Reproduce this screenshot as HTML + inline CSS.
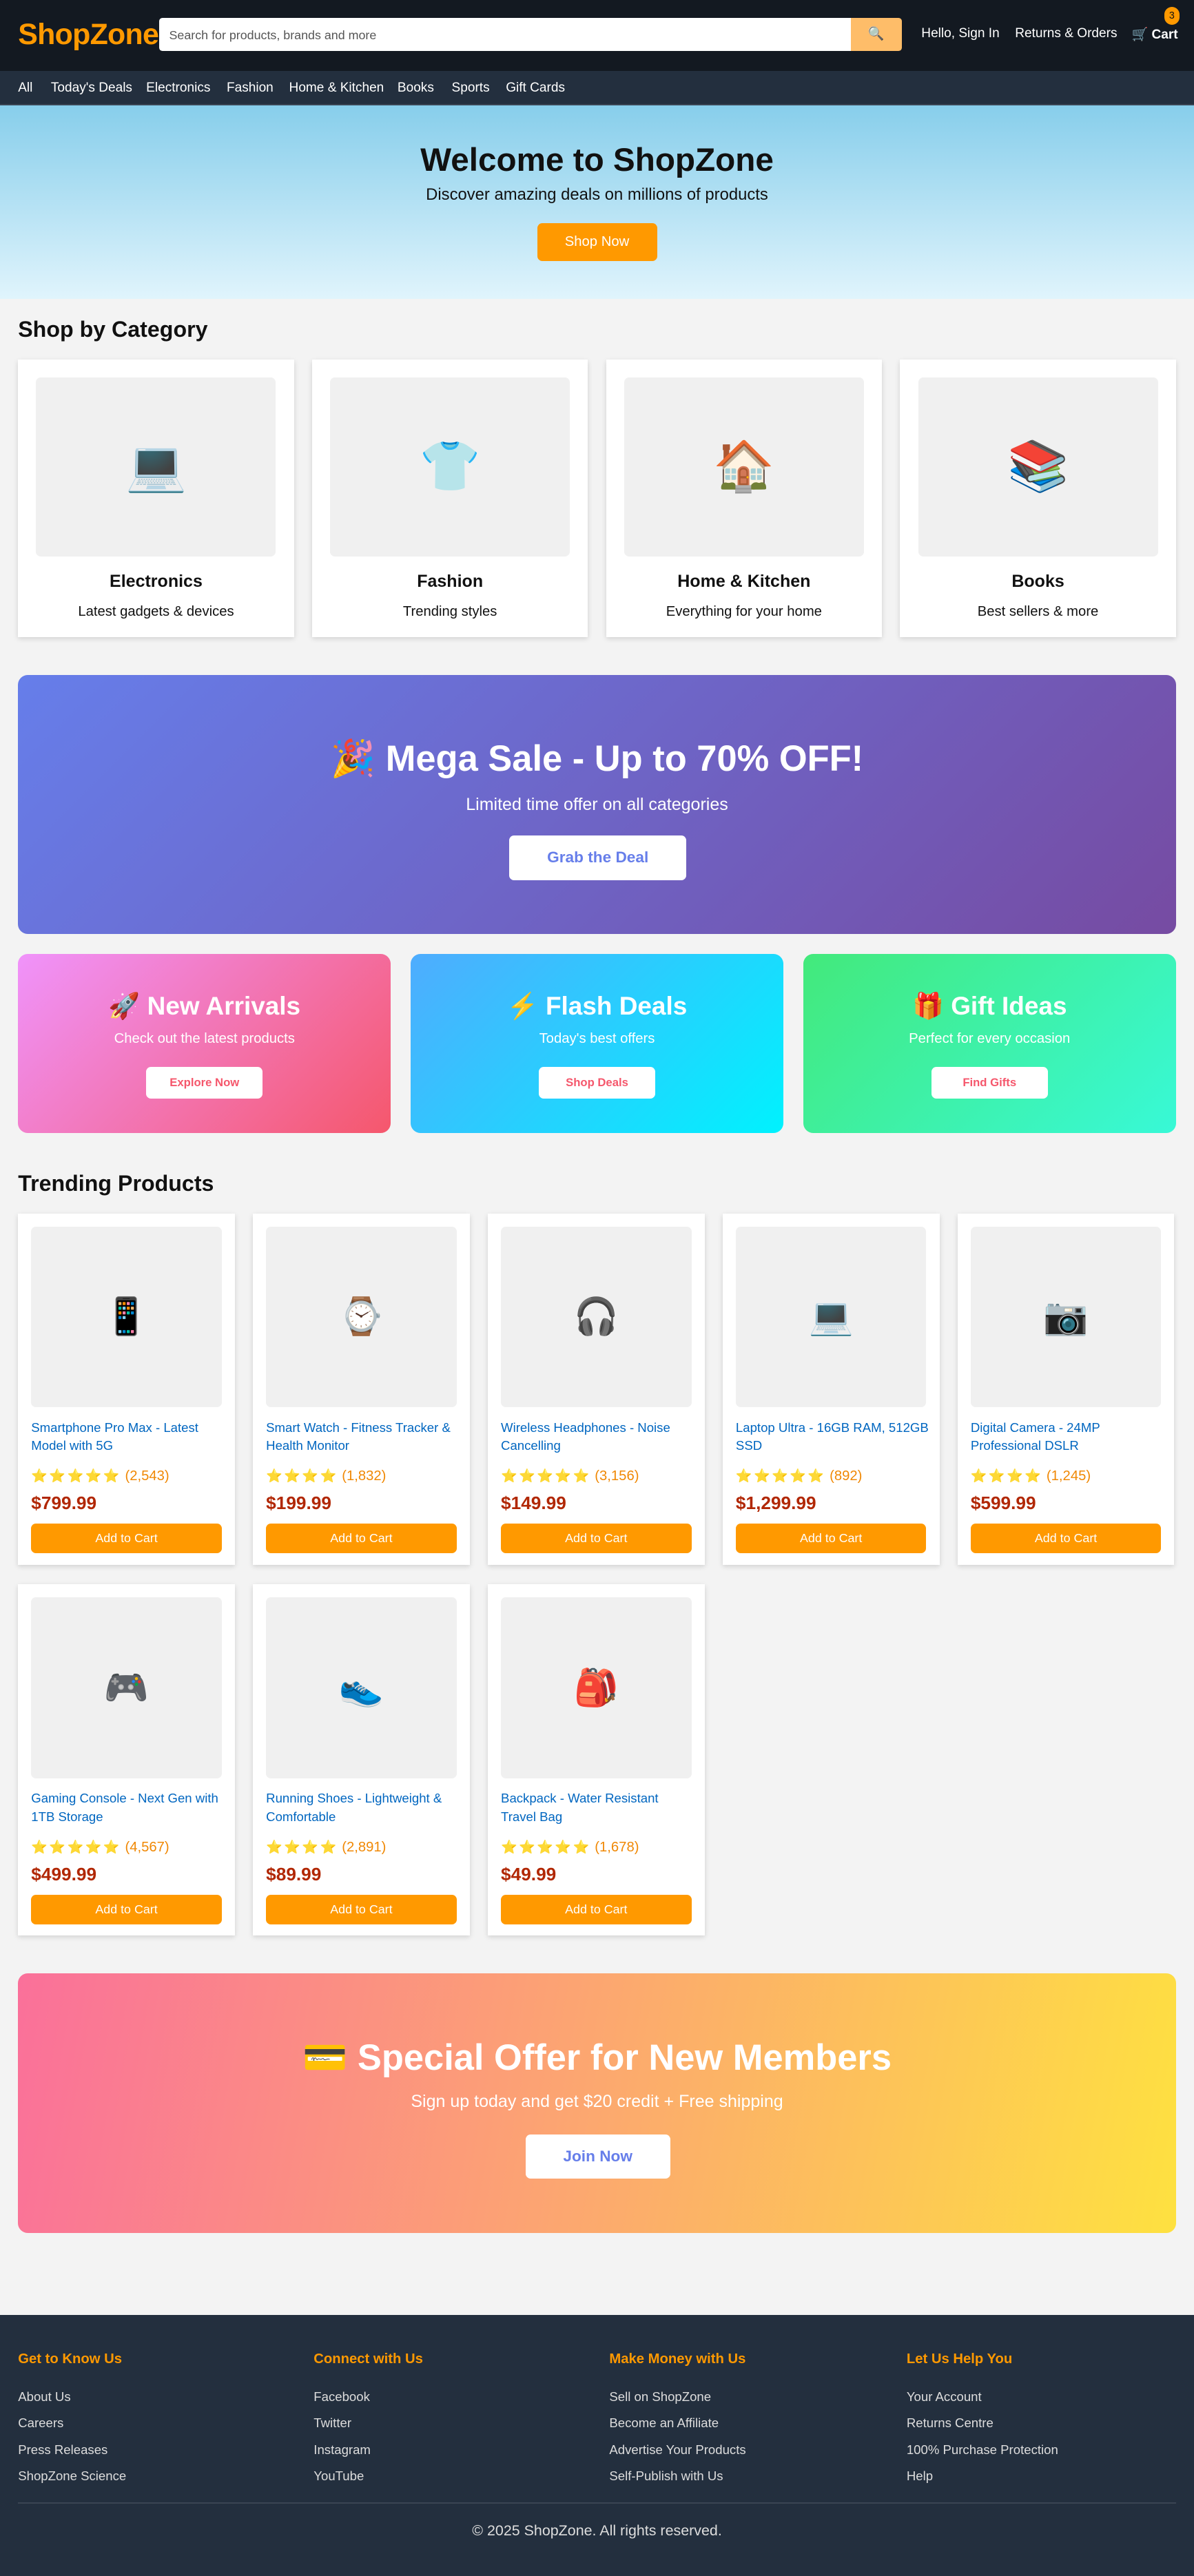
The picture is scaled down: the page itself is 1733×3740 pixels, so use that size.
<!DOCTYPE html>
<html><head><meta charset="utf-8"><style>
*{box-sizing:border-box;margin:0;padding:0}
html{background:#f3f3f3}
body{zoom:2.3838;width:727px;height:1569px;position:relative;overflow:hidden;font-family:"Liberation Sans",Arial,sans-serif;background:#f3f3f3;color:#111}
.a{position:absolute}
.hdr{left:0;top:0;width:727px;height:43px;background:#131921}
.logo{left:11px;top:11px;font-size:18px;font-weight:bold;color:#ff9900;letter-spacing:-0.3px}
.search{left:97px;top:11px;width:421px;height:20px;background:#fff;border-radius:2px 0 0 2px;font-size:7.5px;color:#555;padding:6px 6px}
.sbtn{left:518px;top:11px;width:31px;height:20px;background:#febd69;border-radius:0 2px 2px 0;font-size:8px;text-align:center;line-height:20px}
.hl{top:16px;font-size:8px;color:#fff}
.nav{left:0;top:43px;width:727px;height:21px;background:#232f3e;border-bottom:1px solid #3a4553}
.nav span{position:absolute;top:6px;font-size:8px;color:#fff}
.hero{left:0;top:64px;width:727px;height:118px;background:linear-gradient(#87ceeb,#e0f4fc);text-align:center}
.hero h1{position:absolute;left:0;right:0;top:22px;font-size:20px;color:#111}
.hero p{position:absolute;left:0;right:0;top:49px;font-size:10px;color:#111}
.btn-o{left:327px;top:72px;width:73px;height:23px;background:#ff9900;border-radius:3px;color:#fff;font-size:8.5px;line-height:23px}
h2{position:absolute;left:11px;font-size:13.5px;font-weight:bold;color:#111}
.cat{width:168px;height:169px;background:#fff;box-shadow:0 1px 3px rgba(0,0,0,.15);text-align:center}
.cat .im{position:absolute;left:11px;top:11px;width:146px;height:109px;background:#f0f0f0;border-radius:3px}
.cat .t{position:absolute;left:0;right:0;top:129px;font-size:10.5px;font-weight:bold}
.cat .d{position:absolute;left:0;right:0;top:149px;font-size:8.5px}
.ic{position:absolute;left:0;right:0;top:50%;transform:translateY(-50%);text-align:center;line-height:1}
.cat .ic{font-size:30px}
.pc .ic{font-size:22px}
.mega{left:11px;top:411px;width:705px;height:158px;border-radius:6px;background:linear-gradient(135deg,#667eea,#764ba2);text-align:center;color:#fff}
.promo{top:581px;width:227px;height:109px;border-radius:6px;text-align:center;color:#fff}
.promo .t{position:absolute;left:0;right:0;top:23px;font-size:15.5px;font-weight:bold}
.promo .s{position:absolute;left:0;right:0;top:47px;font-size:8.5px}
.promo .b{position:absolute;left:78px;top:69px;width:71px;height:19px;background:#fff;border-radius:3px;color:#f5576c;font-size:7px;font-weight:bold;line-height:19px}
.pc{width:132px;height:214px;background:#fff;box-shadow:0 1px 3px rgba(0,0,0,.15)}
.pc .im{position:absolute;left:8px;top:8px;width:116px;height:110px;background:#f0f0f0;border-radius:3px}
.pc .n{position:absolute;left:8px;top:125px;width:118px;font-size:7.8px;line-height:11px;color:#0066c0}
.pc .r{position:absolute;left:8px;top:155px;font-size:8.5px;color:#f08804;white-space:nowrap}
.pc .r i{font-style:normal;font-size:8px;letter-spacing:1px}
.pc .p{position:absolute;left:8px;top:170px;font-size:11px;font-weight:bold;color:#b12704}
.pc .c{position:absolute;left:8px;top:189px;width:116px;height:18px;background:#ff9900;border-radius:3px;color:#fff;font-size:7.5px;text-align:center;line-height:18px}
.spec{left:11px;top:1202px;width:705px;height:158px;border-radius:6px;background:linear-gradient(100deg,#fa709a,#fca86f 50%,#fee140);text-align:center;color:#fff}
.ft{left:0;top:1410px;width:727px;height:159px;background:#232f3e}
.fh{top:1432px;font-size:8.5px;font-weight:bold;color:#ff9900}
.fl{font-size:7.8px;color:#ddd}
</style></head><body>
<div class="a hdr"></div>
<div class="a logo">ShopZone</div>
<div class="a search">Search for products, brands and more</div>
<div class="a sbtn">🔍</div>
<div class="a hl" style="left:561px">Hello, Sign In</div>
<div class="a hl" style="left:618px">Returns &amp; Orders</div>
<div class="a hl" style="left:689px;font-weight:bold">🛒 Cart</div>
<div class="a" style="left:709px;top:4px;width:9px;height:11px;border-radius:5px;background:#ff9900;color:#111;font-size:6px;text-align:center;line-height:11px">3</div>
<div class="a nav"><span style="left:11px">All</span><span style="left:31px">Today's Deals</span><span style="left:89px">Electronics</span><span style="left:138px">Fashion</span><span style="left:176px">Home &amp; Kitchen</span><span style="left:242px">Books</span><span style="left:275px">Sports</span><span style="left:308px">Gift Cards</span></div>
<div class="a hero"><h1>Welcome to ShopZone</h1><p>Discover amazing deals on millions of products</p><div class="a btn-o">Shop Now</div></div>

<h2 style="top:193px">Shop by Category</h2>
<div class="a cat" style="left:11px;top:219px"><div class="im"><div class="ic">💻</div></div><div class="t">Electronics</div><div class="d">Latest gadgets &amp; devices</div></div>
<div class="a cat" style="left:190px;top:219px"><div class="im"><div class="ic">👕</div></div><div class="t">Fashion</div><div class="d">Trending styles</div></div>
<div class="a cat" style="left:369px;top:219px"><div class="im"><div class="ic">🏠</div></div><div class="t">Home &amp; Kitchen</div><div class="d">Everything for your home</div></div>
<div class="a cat" style="left:548px;top:219px"><div class="im"><div class="ic">📚</div></div><div class="t">Books</div><div class="d">Best sellers &amp; more</div></div>

<div class="a mega"><div class="a" style="left:0;right:0;top:38px;font-size:22px;font-weight:bold">🎉 Mega Sale - Up to 70% OFF!</div><div class="a" style="left:0;right:0;top:73px;font-size:10.5px">Limited time offer on all categories</div><div class="a" style="left:299px;top:98px;width:108px;height:27px;background:#fff;border-radius:3px;color:#667eea;font-size:9.5px;font-weight:bold;line-height:27px">Grab the Deal</div></div>

<div class="a promo" style="left:11px;background:linear-gradient(135deg,#f093fb,#f5576c)"><div class="t">🚀 New Arrivals</div><div class="s">Check out the latest products</div><div class="b">Explore Now</div></div>
<div class="a promo" style="left:250px;background:linear-gradient(135deg,#4facfe,#00f2fe)"><div class="t">⚡ Flash Deals</div><div class="s">Today's best offers</div><div class="b">Shop Deals</div></div>
<div class="a promo" style="left:489px;background:linear-gradient(135deg,#43e97b,#38f9d7)"><div class="t">🎁 Gift Ideas</div><div class="s">Perfect for every occasion</div><div class="b">Find Gifts</div></div>

<h2 style="top:713px">Trending Products</h2>
<div class="a pc" style="left:11px;top:739px"><div class="im"><div class="ic">📱</div></div><div class="n">Smartphone Pro Max - Latest Model with 5G</div><div class="r"><i>⭐⭐⭐⭐⭐</i> (2,543)</div><div class="p">$799.99</div><div class="c">Add to Cart</div></div>
<div class="a pc" style="left:154px;top:739px"><div class="im"><div class="ic">⌚</div></div><div class="n">Smart Watch - Fitness Tracker &amp; Health Monitor</div><div class="r"><i>⭐⭐⭐⭐</i> (1,832)</div><div class="p">$199.99</div><div class="c">Add to Cart</div></div>
<div class="a pc" style="left:297px;top:739px"><div class="im"><div class="ic">🎧</div></div><div class="n">Wireless Headphones - Noise Cancelling</div><div class="r"><i>⭐⭐⭐⭐⭐</i> (3,156)</div><div class="p">$149.99</div><div class="c">Add to Cart</div></div>
<div class="a pc" style="left:440px;top:739px"><div class="im"><div class="ic">💻</div></div><div class="n">Laptop Ultra - 16GB RAM, 512GB SSD</div><div class="r"><i>⭐⭐⭐⭐⭐</i> (892)</div><div class="p">$1,299.99</div><div class="c">Add to Cart</div></div>
<div class="a pc" style="left:583px;top:739px"><div class="im"><div class="ic">📷</div></div><div class="n">Digital Camera - 24MP Professional DSLR</div><div class="r"><i>⭐⭐⭐⭐</i> (1,245)</div><div class="p">$599.99</div><div class="c">Add to Cart</div></div>
<div class="a pc" style="left:11px;top:965px"><div class="im"><div class="ic">🎮</div></div><div class="n">Gaming Console - Next Gen with 1TB Storage</div><div class="r"><i>⭐⭐⭐⭐⭐</i> (4,567)</div><div class="p">$499.99</div><div class="c">Add to Cart</div></div>
<div class="a pc" style="left:154px;top:965px"><div class="im"><div class="ic">👟</div></div><div class="n">Running Shoes - Lightweight &amp; Comfortable</div><div class="r"><i>⭐⭐⭐⭐</i> (2,891)</div><div class="p">$89.99</div><div class="c">Add to Cart</div></div>
<div class="a pc" style="left:297px;top:965px"><div class="im"><div class="ic">🎒</div></div><div class="n">Backpack - Water Resistant Travel Bag</div><div class="r"><i>⭐⭐⭐⭐⭐</i> (1,678)</div><div class="p">$49.99</div><div class="c">Add to Cart</div></div>

<div class="a spec"><div class="a" style="left:0;right:0;top:38px;font-size:22px;font-weight:bold">💳 Special Offer for New Members</div><div class="a" style="left:0;right:0;top:72px;font-size:10.5px">Sign up today and get $20 credit + Free shipping</div><div class="a" style="left:309px;top:98px;width:88px;height:27px;background:#fff;border-radius:3px;color:#667eea;font-size:9.5px;font-weight:bold;line-height:27px">Join Now</div></div>

<div class="a ft"></div>
<div class="a fh" style="left:11px">Get to Know Us</div>
<div class="a fh" style="left:191px">Connect with Us</div>
<div class="a fh" style="left:371px">Make Money with Us</div>
<div class="a fh" style="left:552px">Let Us Help You</div>
<div class="a fl" style="left:11px;top:1452px;line-height:16px">About Us<br>Careers<br>Press Releases<br>ShopZone Science</div>
<div class="a fl" style="left:191px;top:1452px;line-height:16px">Facebook<br>Twitter<br>Instagram<br>YouTube</div>
<div class="a fl" style="left:371px;top:1452px;line-height:16px">Sell on ShopZone<br>Become an Affiliate<br>Advertise Your Products<br>Self-Publish with Us</div>
<div class="a fl" style="left:552px;top:1452px;line-height:16px">Your Account<br>Returns Centre<br>100% Purchase Protection<br>Help</div>
<div class="a" style="left:11px;top:1524px;width:705px;height:1px;background:#3a4553"></div>
<div class="a" style="left:0;width:727px;top:1536px;text-align:center;font-size:9px;color:#ddd">© 2025 ShopZone. All rights reserved.</div>
</body></html>
